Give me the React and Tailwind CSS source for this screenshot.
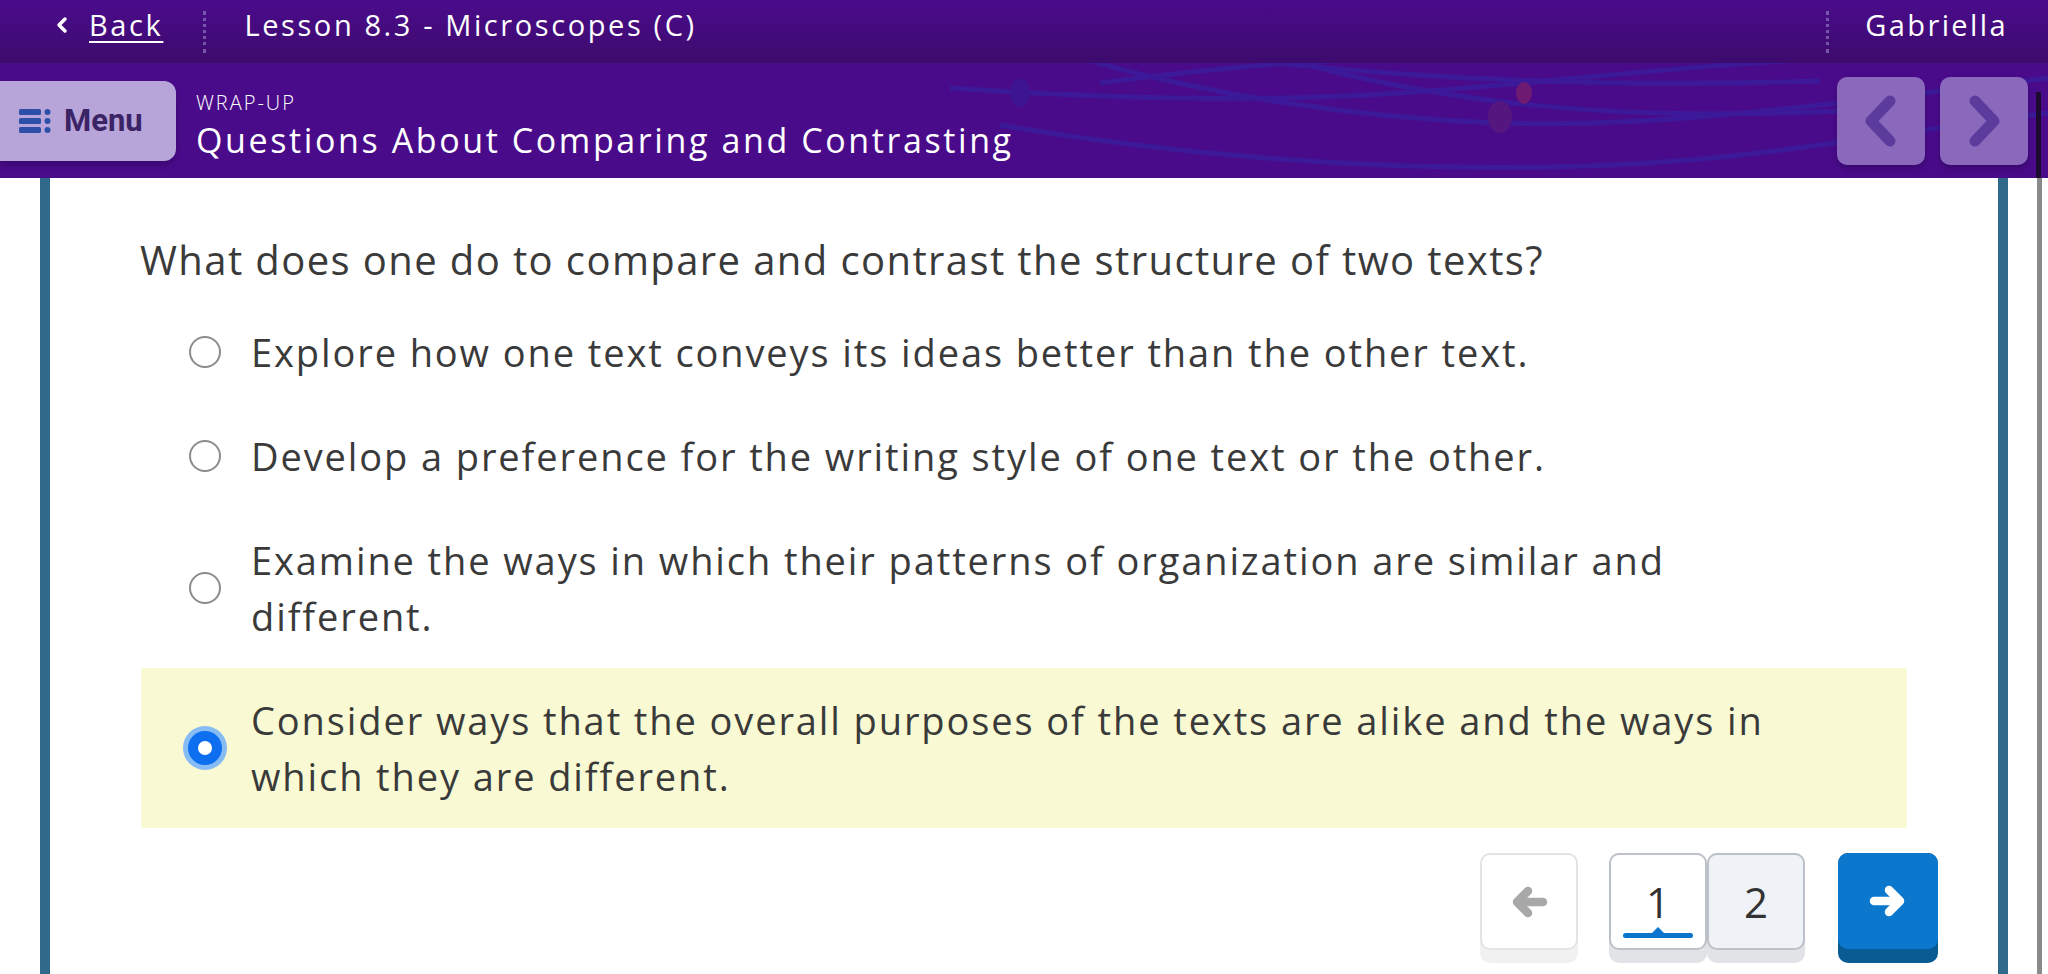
import React from "react";

const font = { fontFamily: '"Open Sans", "Liberation Sans", sans-serif' };

const options = [
  { id: 1, lines: ["Explore how one text conveys its ideas better than the other text."] },
  { id: 2, lines: ["Develop a preference for the writing style of one text or the other."] },
  { id: 3, lines: ["Examine the ways in which their patterns of organization are similar and", "different."] },
  { id: 4, lines: ["Consider ways that the overall purposes of the texts are alike and the ways in", "which they are different."], selected: true },
];

const Dots = () => (
  <div className="h-[42px] w-0 border-l-[3px] border-dotted border-[#7656a8]" />
);

const Chevron = ({ dir }) => (
  <svg width="40" height="52" viewBox="0 0 40 52">
    <polyline
      points={dir === "left" ? "29,6 10,26 29,46" : "11,6 30,26 11,46"}
      fill="none"
      stroke="#5b3c9d"
      strokeWidth="11"
      strokeLinecap="round"
      strokeLinejoin="round"
    />
  </svg>
);

// chunky rounded arrow like the font-awesome one
const Arrow = ({ dir, color }) => (
  <svg width="38" height="32" viewBox="0 0 38 32" style={{ transform: dir === "left" ? "scaleX(-1)" : "none" }}>
    <g fill="none" stroke={color} strokeWidth="8.5" strokeLinecap="round" strokeLinejoin="round">
      <line x1="5" y1="16" x2="30" y2="16" />
      <polyline points="20,5 31,16 20,27" />
    </g>
  </svg>
);

const Radio = ({ selected }) =>
  selected ? (
    <div className="w-[44px] h-[44px] rounded-full bg-[#86bbf3] flex items-center justify-center shrink-0">
      <div className="w-[34px] h-[34px] rounded-full bg-[#0d6ef0] flex items-center justify-center">
        <div className="w-[14px] h-[14px] rounded-full bg-white" />
      </div>
    </div>
  ) : (
    <div className="w-[44px] h-[44px] flex items-center justify-center shrink-0">
      <div className="w-[32px] h-[32px] rounded-full border-[2.5px] border-[#8c8c8c] bg-white" />
    </div>
  );

export default function App() {
  return (
    <div className="w-full h-[974px] overflow-hidden bg-white flex flex-col" style={font}>
      {/* top bar */}
      <div className="h-[63px] shrink-0 bg-gradient-to-b from-[#4b0b8c] to-[#3c0b6c] flex items-center text-white pb-[14px]">
        <div className="flex items-center pl-[55px] gap-[20px]">
          <svg width="14" height="18" viewBox="0 0 14 18">
            <polyline points="10,3 4,9 10,15" fill="none" stroke="white" strokeWidth="3.5" strokeLinecap="round" strokeLinejoin="round" />
          </svg>
          <span className="text-[29px] tracking-[2.6px] underline underline-offset-[5px] decoration-[2px] leading-none">Back</span>
        </div>
        <div className="ml-[40px] mt-[14px]"><Dots /></div>
        <span className="ml-[38px] text-[29px] leading-none tracking-[2.6px]">Lesson 8.3 - Microscopes (C)</span>
        <div className="ml-auto mt-[14px]"><Dots /></div>
        <span className="ml-[36px] mr-[40px] text-[29px] leading-none tracking-[2.4px]">Gabriella</span>
      </div>

      {/* title bar */}
      <div className="h-[115px] shrink-0 bg-[#4a0b8b] relative flex items-center">
        <svg className="absolute inset-0" width="2048" height="115" viewBox="0 0 2048 115">
          <g fill="none" stroke="#3a1c9c" strokeWidth="5" opacity="0.85">
            <path d="M950,25 C1100,35 1250,40 1400,30 S1700,0 1850,-5" />
            <path d="M1080,-5 C1200,30 1350,55 1500,60 S1800,45 2048,15" />
            <path d="M1000,62 C1150,88 1350,108 1550,104 S1850,75 2048,50" />
            <path d="M1230,-5 C1400,15 1600,25 1820,18" />
            <path d="M1300,0 C1450,40 1620,62 1900,45" />
            <path d="M1100,20 C1250,0 1350,-5 1450,-5" />
          </g>
          <ellipse cx="1020" cy="30" rx="10" ry="14" fill="#3d1592" />
          <ellipse cx="1524" cy="30" rx="8" ry="11" fill="#6e1a72" />
          <ellipse cx="1500" cy="54" rx="12" ry="16" fill="#55177f" />
        </svg>

        <div className="relative w-[176px] h-[80px] bg-[#b7a4d8] rounded-r-[12px] shadow-[0_4px_6px_rgba(30,0,60,0.35)] flex items-center pl-[19px] gap-[13px]">
          <svg width="32" height="26" viewBox="0 0 32 26">
            <g fill="#2c4fa8">
              <rect x="0" y="1" width="22" height="6" rx="1.5" />
              <rect x="0" y="10" width="22" height="6" rx="1.5" />
              <rect x="0" y="19" width="22" height="6" rx="1.5" />
              <circle cx="28.5" cy="4" r="3" />
              <circle cx="28.5" cy="13" r="3" />
              <circle cx="28.5" cy="22" r="3" />
            </g>
          </svg>
          <span className="text-[31px] font-bold text-[#3b2466] leading-none" style={{ fontFamily: "Roboto, sans-serif" }}>Menu</span>
        </div>

        <div className="relative ml-[20px] mt-[8px] flex flex-col text-white">
          <span className="text-[20px] font-light leading-none tracking-[2px]">WRAP-UP</span>
          <span className="mt-[10px] text-[34px] font-medium leading-none tracking-[2.6px]">Questions About Comparing and Contrasting</span>
        </div>

        <div className="relative ml-auto mr-[8px] flex gap-[15px] self-start mt-[14px]">
          <div className="w-[88px] h-[88px] rounded-[10px] bg-[#8a69bd] shadow-[0_4px_6px_rgba(30,0,60,0.35)] flex items-center justify-center">
            <Chevron dir="left" />
          </div>
          <div className="w-[88px] h-[88px] rounded-[10px] bg-[#8a69bd] shadow-[0_4px_6px_rgba(30,0,60,0.35)] flex items-center justify-center">
            <Chevron dir="right" />
          </div>
        </div>
        <div className="relative w-[5px] h-[86px] self-end bg-[#1c0b2e] mr-[7px]" />
      </div>

      {/* body */}
      <div className="flex-1 flex min-h-0">
        <div className="ml-[40px] w-[1968px] border-x-[10px] border-[#306a8a] flex flex-col">
          <div className="pl-[90px] pt-[54px] text-[40px] leading-[56px] tracking-[1.4px] text-[#3a3a3a] whitespace-nowrap">
            What does one do to compare and contrast the structure of two texts?
          </div>

          <div className="mt-[12px] mx-[91px] flex flex-col">
            {options.map((o) => (
              <div
                key={o.id}
                className={`flex items-center py-[24px] pl-[42px] ${o.selected ? "bg-[#f9fad3]" : ""}`}
              >
                <Radio selected={o.selected} />
                <div className="ml-[24px] text-[38px] leading-[56px] tracking-[1.9px] text-[#3a3a3a] whitespace-nowrap">
                  {o.lines.map((l, i) => (
                    <div key={i}>{l}</div>
                  ))}
                </div>
              </div>
            ))}
          </div>

          {/* pagination */}
          <div className="mt-[25px] flex justify-end pr-[60px]">
            <div className="w-[98px] h-[110px] rounded-[10px] bg-[#f1f1f2] flex flex-col">
              <div className="h-[97px] rounded-[10px] bg-white border-2 border-[#e4e4e6] flex items-center justify-center">
                <Arrow dir="left" color="#a8a8a8" />
              </div>
            </div>

            <div className="ml-[31px] flex">
              <div className="w-[98px] h-[110px] rounded-[10px] bg-[#e1e3e7] flex flex-col">
                <div className="relative h-[97px] rounded-[10px] bg-white border-2 border-[#bcc0c8] flex items-center justify-center">
                  <span className="text-[42px] text-[#333] leading-none">1</span>
                  <div className="absolute left-[12px] right-[12px] bottom-[10px] h-[5px] rounded-full bg-[#0b74cc]" />
                  <div className="absolute left-1/2 -translate-x-1/2 bottom-[14px] w-0 h-0 border-x-[7px] border-x-transparent border-b-[7px] border-b-[#0b74cc]" />
                </div>
              </div>
              <div className="w-[98px] h-[110px] rounded-[10px] bg-[#e1e3e7] flex flex-col">
                <div className="h-[97px] rounded-[10px] bg-[#eff2f6] border-2 border-[#bcc0c8] flex items-center justify-center">
                  <span className="text-[42px] text-[#333] leading-none">2</span>
                </div>
              </div>
            </div>

            <div className="ml-[33px] w-[100px] h-[110px] rounded-[10px] bg-[#0a5a94] flex flex-col">
              <div className="h-[96px] rounded-[10px] bg-[#0b78cd] flex items-center justify-center">
                <Arrow dir="right" color="white" />
              </div>
            </div>
          </div>
        </div>
        <div className="ml-[29px] w-[5px] bg-[#8a8a8a]" />
      </div>
    </div>
  );
}
